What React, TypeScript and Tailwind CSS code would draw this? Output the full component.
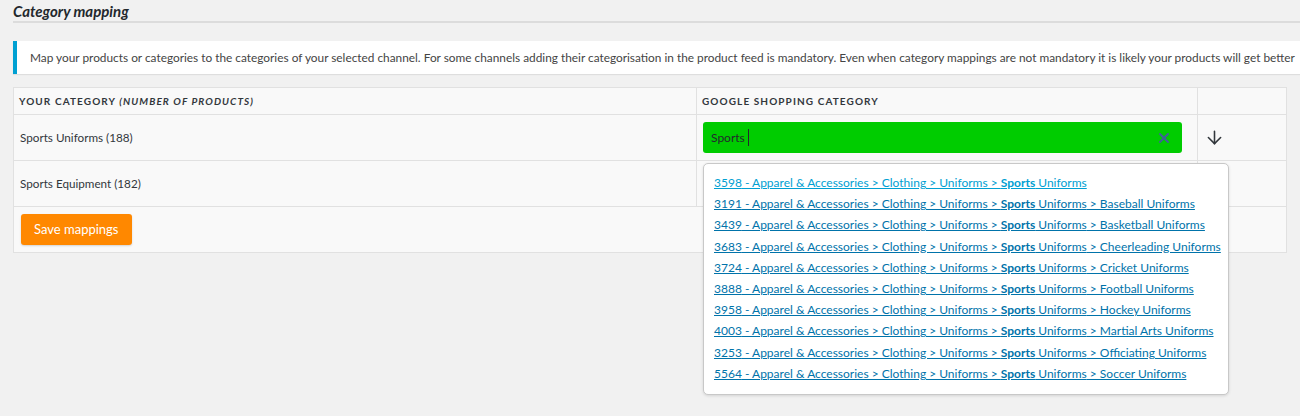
import React from 'react';
import { ArrowDown, X } from 'lucide-react';

const suggestions = [
  { id: '3598', tail: '' },
  { id: '3191', tail: ' > Baseball Uniforms' },
  { id: '3439', tail: ' > Basketball Uniforms' },
  { id: '3683', tail: ' > Cheerleading Uniforms' },
  { id: '3724', tail: ' > Cricket Uniforms' },
  { id: '3888', tail: ' > Football Uniforms' },
  { id: '3958', tail: ' > Hockey Uniforms' },
  { id: '4003', tail: ' > Martial Arts Uniforms' },
  { id: '3253', tail: ' > Officiating Uniforms' },
  { id: '5564', tail: ' > Soccer Uniforms' },
];

export default function App() {
  return (
    <div
      className="h-[416px] w-[1300px] overflow-hidden bg-[#f1f1f1] pl-[13px] text-[11.7px] text-[#444]"
      style={{ fontFamily: 'Lato, "Noto Sans", Arial, sans-serif' }}
    >
      {/* --- Section heading --- */}
      <div className="w-[1287px] border-b-2 border-[#dcdcdc] pt-[2px] pb-[1px]">
        <h2 className="text-[15px] font-bold italic leading-[18px] text-[#23282d]">
          Category mapping
        </h2>
      </div>

      {/* --- Notice --- */}
      <div className="mt-[18px] flex h-[33px] w-[1287px] items-center whitespace-nowrap border-l-4 border-[#00a0d2] bg-white pl-[13px] text-[11.85px] shadow-[0_1px_1px_rgba(0,0,0,0.08)]">
        Map your products or categories to the categories of your selected channel. For some channels adding their categorisation in the product feed is mandatory. Even when category mappings are not mandatory it is likely your products will get better
      </div>

      {/* --- Mapping table --- */}
      <table className="mt-[13px] w-[1273px] table-fixed border-collapse border border-[#e1e1e1] bg-[#f9f9f9] text-[#32373c]">
        <colgroup>
          <col className="w-[683px]" />
          <col className="w-[501px]" />
          <col className="w-[89px]" />
        </colgroup>
        <thead>
          <tr className="h-[27px] border-b border-[#e1e1e1]">
            <th className="border-r border-[#e1e1e1] px-[5px] text-left text-[10px] font-bold uppercase tracking-[1.1px]">
              Your category <i>(number of products)</i>
            </th>
            <th className="border-r border-[#e1e1e1] px-[5px] text-left text-[10px] font-bold uppercase tracking-[1.1px]">
              Google shopping category
            </th>
            <th />
          </tr>
        </thead>
        <tbody>
          <tr className="h-[46px] border-b border-[#e1e1e1]">
            <td className="border-r border-[#e1e1e1] px-[6px]">Sports Uniforms (188)</td>
            <td className="border-r border-[#e1e1e1] px-[6px]">
              <div className="relative">
                <div className="flex h-[31px] w-[479px] items-center justify-between rounded-[3px] bg-[#00cc00] pl-[8px] pr-[10px] text-[12px] text-[#23282d]">
                  <span className="flex items-center">
                    Sports<span className="ml-[3px] inline-block h-[17px] w-px bg-[#23282d]" />
                  </span>
                  <X size={16} strokeWidth={2.8} className="text-[#41609a]" />
                </div>

                <div className="absolute left-0 top-[41px] z-10 w-[526px] rounded-[5px] border border-[#c8c8c8] bg-white px-[10px] pt-[8px] pb-[10px] text-[12px] shadow-[0_1px_3px_rgba(0,0,0,0.12)]">
                  {suggestions.map((s, i) => (
                    <a
                      key={s.id}
                      href="#"
                      className={`block whitespace-nowrap leading-[21.2px] underline ${i === 0 ? 'text-[#00a0d2]' : 'text-[#0073aa]'}`}
                    >
                      {s.id} - Apparel &amp; Accessories &gt; Clothing &gt; Uniforms &gt; <b>Sports</b> Uniforms{s.tail}
                    </a>
                  ))}
                </div>
              </div>
            </td>
            <td className="px-[6px]">
              <ArrowDown size={21} strokeWidth={1.8} className="text-[#32373c]" />
            </td>
          </tr>
          <tr className="h-[46px] border-b border-[#e1e1e1]">
            <td className="border-r border-[#e1e1e1] px-[6px]">Sports Equipment (182)</td>
            <td className="border-r border-[#e1e1e1]" />
            <td />
          </tr>
          <tr className="h-[46px]">
            <td colSpan={3} className="px-[7px]">
              <button className="h-[31px] rounded-[3px] bg-[#ff8800] px-[13px] text-[13px] text-white shadow-[0_1px_2px_rgba(0,0,0,0.15)]">
                Save mappings
              </button>
            </td>
          </tr>
        </tbody>
      </table>
    </div>
  );
}
